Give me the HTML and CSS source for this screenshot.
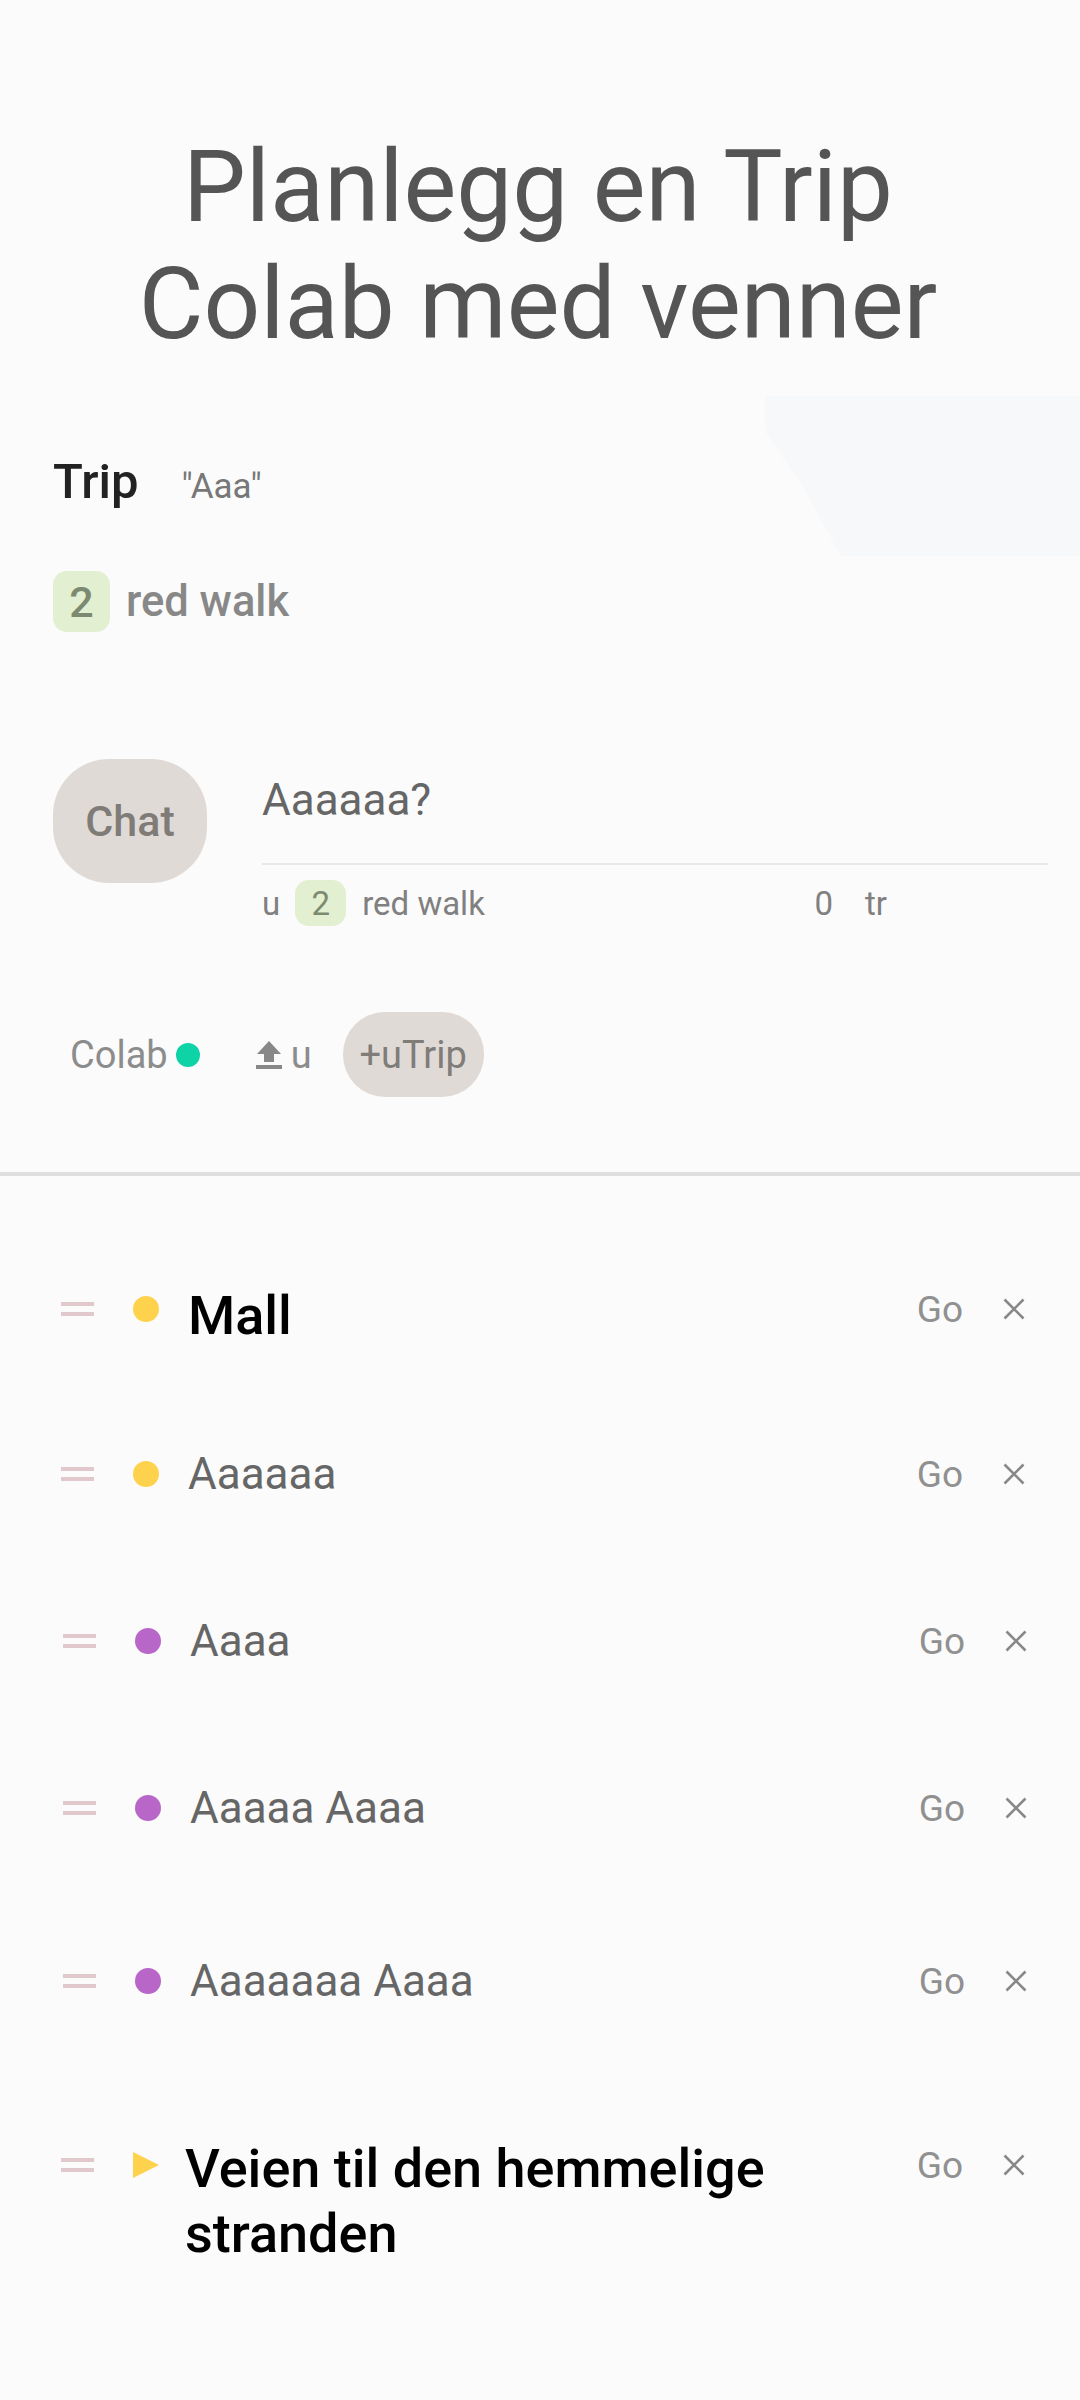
FILE: index.html
```html
<!DOCTYPE html>
<html lang="en">
<head>
  <meta charset="UTF-8">
  <title>Planlegg en Trip</title>
  <link rel="stylesheet" href="styles.css">
</head>
<body>

  <div class="smudge"></div>

  <h1 class="title">Planlegg en Trip<br>Colab med venner</h1>

  <div class="trip-head">
    <span class="trip-label">Trip</span>
    <span class="trip-name">"Aaa"</span>
  </div>

  <div class="walk">
    <span class="badge">2</span>
    <span class="walk-text">red walk</span>
  </div>

  <div class="chat">
    <div class="chat-btn">Chat</div>
    <div class="chat-body">
      <div class="chat-input">Aaaaaa?</div>
      <div class="chat-meta">
        <span>u</span>
        <span class="badge badge-sm">2</span>
        <span>red walk</span>
        <span class="chat-count">0</span>
        <span class="chat-tr">tr</span>
      </div>
    </div>
  </div>

  <div class="actions">
    <span class="colab">Colab</span>
    <span class="dot-online"></span>
    <svg class="upload" viewBox="0 0 26 28"><path d="M13 0 L25 13 H18 V21 H8 V13 H1 Z M0 24 H26 V28 H0 Z" fill="#888"/></svg>
    <span class="upload-u">u</span>
    <span class="pill">+uTrip</span>
  </div>

  <hr class="divider">

  <ul class="stops">
    <li class="stop stop-1">
      <span class="grip"></span><span class="mark yellow"></span>
      <span class="name name-big">Mall</span>
      <span class="go">Go</span>
      <svg class="close" viewBox="0 0 22 22"><path d="M1.5 1.5 L20.5 20.5 M20.5 1.5 L1.5 20.5" stroke="#888" stroke-width="2.6" fill="none"/></svg>
    </li>
    <li class="stop stop-2">
      <span class="grip"></span><span class="mark yellow"></span>
      <span class="name">Aaaaaa</span>
      <span class="go">Go</span>
      <svg class="close" viewBox="0 0 22 22"><path d="M1.5 1.5 L20.5 20.5 M20.5 1.5 L1.5 20.5" stroke="#888" stroke-width="2.6" fill="none"/></svg>
    </li>
    <li class="stop stop-3 shifted">
      <span class="grip"></span><span class="mark purple"></span>
      <span class="name">Aaaa</span>
      <span class="go">Go</span>
      <svg class="close" viewBox="0 0 22 22"><path d="M1.5 1.5 L20.5 20.5 M20.5 1.5 L1.5 20.5" stroke="#888" stroke-width="2.6" fill="none"/></svg>
    </li>
    <li class="stop stop-4 shifted">
      <span class="grip"></span><span class="mark purple"></span>
      <span class="name">Aaaaa Aaaa</span>
      <span class="go">Go</span>
      <svg class="close" viewBox="0 0 22 22"><path d="M1.5 1.5 L20.5 20.5 M20.5 1.5 L1.5 20.5" stroke="#888" stroke-width="2.6" fill="none"/></svg>
    </li>
    <li class="stop stop-5 shifted">
      <span class="grip"></span><span class="mark purple"></span>
      <span class="name">Aaaaaaa Aaaa</span>
      <span class="go">Go</span>
      <svg class="close" viewBox="0 0 22 22"><path d="M1.5 1.5 L20.5 20.5 M20.5 1.5 L1.5 20.5" stroke="#888" stroke-width="2.6" fill="none"/></svg>
    </li>
    <li class="stop stop-6">
      <span class="grip"></span><span class="mark-play"></span>
      <span class="name name-route">Veien til den hemmelige<br>stranden</span>
      <span class="go">Go</span>
      <svg class="close" viewBox="0 0 22 22"><path d="M1.5 1.5 L20.5 20.5 M20.5 1.5 L1.5 20.5" stroke="#888" stroke-width="2.6" fill="none"/></svg>
    </li>
  </ul>

</body>
</html>
```

FILE: styles.css
```css
/* ─── Base ─── */
* { box-sizing: border-box; }
html, body { height: 100%; }
body {
  margin: 0;
  position: relative;
  overflow: hidden;
  background: #fbfbfb;
  font-family: Roboto, "Noto Sans", sans-serif;
  color: #888;
}

/* faint patch behind the trip header */
.smudge {
  position: absolute; top: 396px; left: 765px; width: 315px; height: 160px;
  background: #f7f8f9;
  clip-path: polygon(0 0, 100% 0, 100% 100%, 24% 100%, 13% 60%, 0 22%);
}

/* ─── Title ─── */
.title {
  position: relative;
  margin: 0;
  padding: 129px 4px 0 0;
  text-align: center;
  font-size: 99.6px;
  line-height: 117px;
  font-weight: 400;
  color: #555;
}

/* ─── Trip header ─── */
.trip-head { position: relative; display: flex; align-items: baseline; margin-top: 90px; padding-left: 53px; height: 60px; }
.trip-label { font-size: 49px; font-weight: 500; color: #222; }
.trip-name { margin-left: 43px; font-size: 35px; color: #777; }

.walk { display: flex; align-items: center; margin-top: 58px; padding-left: 53px; }
.badge {
  display: flex; align-items: center; justify-content: center;
  width: 57px; height: 61px;
  background: #e2efd0; border-radius: 14px;
  font-size: 43px; font-weight: 500; color: #7b8a70;
}
.walk-text { margin-left: 16px; font-size: 43.5px; font-weight: 500; color: #888; }

/* ─── Chat ─── */
.chat { display: flex; margin-top: 127px; padding: 0 32px 0 53px; }
.chat-btn {
  display: flex; align-items: center; justify-content: center;
  flex: none; width: 154px; height: 124px;
  background: #dfdad6; border-radius: 56px;
  font-size: 43px; font-weight: 500; color: #7f7b76;
}
.chat-body { flex: 1; margin-left: 55px; }
.chat-input {
  height: 106px; padding-top: 15px;
  border-bottom: 2px solid #e8e8e8;
  font-size: 44px; color: #666;
}
.chat-meta { display: flex; align-items: center; height: 46px; margin-top: 15px; font-size: 33px; color: #808080; }
.badge-sm { width: 51px; height: 46px; margin: 0 16px 0 15px; font-size: 33px; font-weight: 400; }
.chat-count { margin-left: auto; margin-right: 32px; }
.chat-tr { margin-right: 161px; }

/* ─── Actions ─── */
.actions { display: flex; align-items: center; margin-top: 86px; padding-left: 70px; height: 85px; font-size: 38px; color: #8c8c8c; }
.dot-online { width: 24px; height: 24px; margin-left: 8px; border-radius: 50%; background: #0dd3a7; }
.upload { width: 26px; height: 28px; margin-left: 56px; }
.upload-u { margin-left: 9px; }
.pill {
  display: flex; align-items: center; justify-content: center;
  width: 141px; height: 85px; margin-left: 31px;
  background: #dfdad6; border-radius: 42px;
  font-size: 38px; color: #807c78;
}

.divider { margin: 75px 0 0; border: 0; height: 4px; background: #dedede; }

/* ─── Stops ─── */
.stops { list-style: none; margin: 0; padding: 0; }
.stop { display: flex; align-items: center; padding: 0 55px 0 61px; }
.stop-1 { height: 150px; margin-top: 58px; }
.stop-2 { height: 120px; margin-top: 30px; }
.stop-3 { height: 120px; margin-top: 47px; }
.stop-4 { height: 120px; margin-top: 47px; }
.stop-5 { height: 120px; margin-top: 53px; }
.stop-6 { align-items: flex-start; margin-top: 98px; }
.shifted { padding: 0 53px 0 63px; }

.grip {
  flex: none; width: 33px; height: 14px;
  border-top: 4px solid #e0c8cc; border-bottom: 4px solid #e0c8cc;
}
.mark { flex: none; width: 26px; height: 26px; margin-left: 39px; border-radius: 50%; }
.yellow { background: #ffd24d; }
.purple { background: #b866c8; }
.mark-play {
  flex: none; width: 0; height: 0; margin-left: 39px;
  border-left: 26px solid #ffd24d;
  border-top: 13px solid transparent;
  border-bottom: 13px solid transparent;
}

.name { flex: 1; margin-left: 29px; font-size: 44px; color: #666; }
.name-big { margin-top: 12px; font-size: 54px; font-weight: 500; color: #000; }
.name-route { margin-left: 26px; margin-top: -3px; font-size: 54px; line-height: 65px; font-weight: 500; color: #000; }
.go { margin-right: 1px; font-size: 37px; color: #909090; }
.close { flex: none; width: 22px; height: 22px; margin-left: 39px; }

.stop-6 .grip { margin-top: 19px; }
.stop-6 .mark-play { margin-top: 13px; }
.stop-6 .go { margin-top: 5px; }
.stop-6 .close { margin-top: 15px; }
```
